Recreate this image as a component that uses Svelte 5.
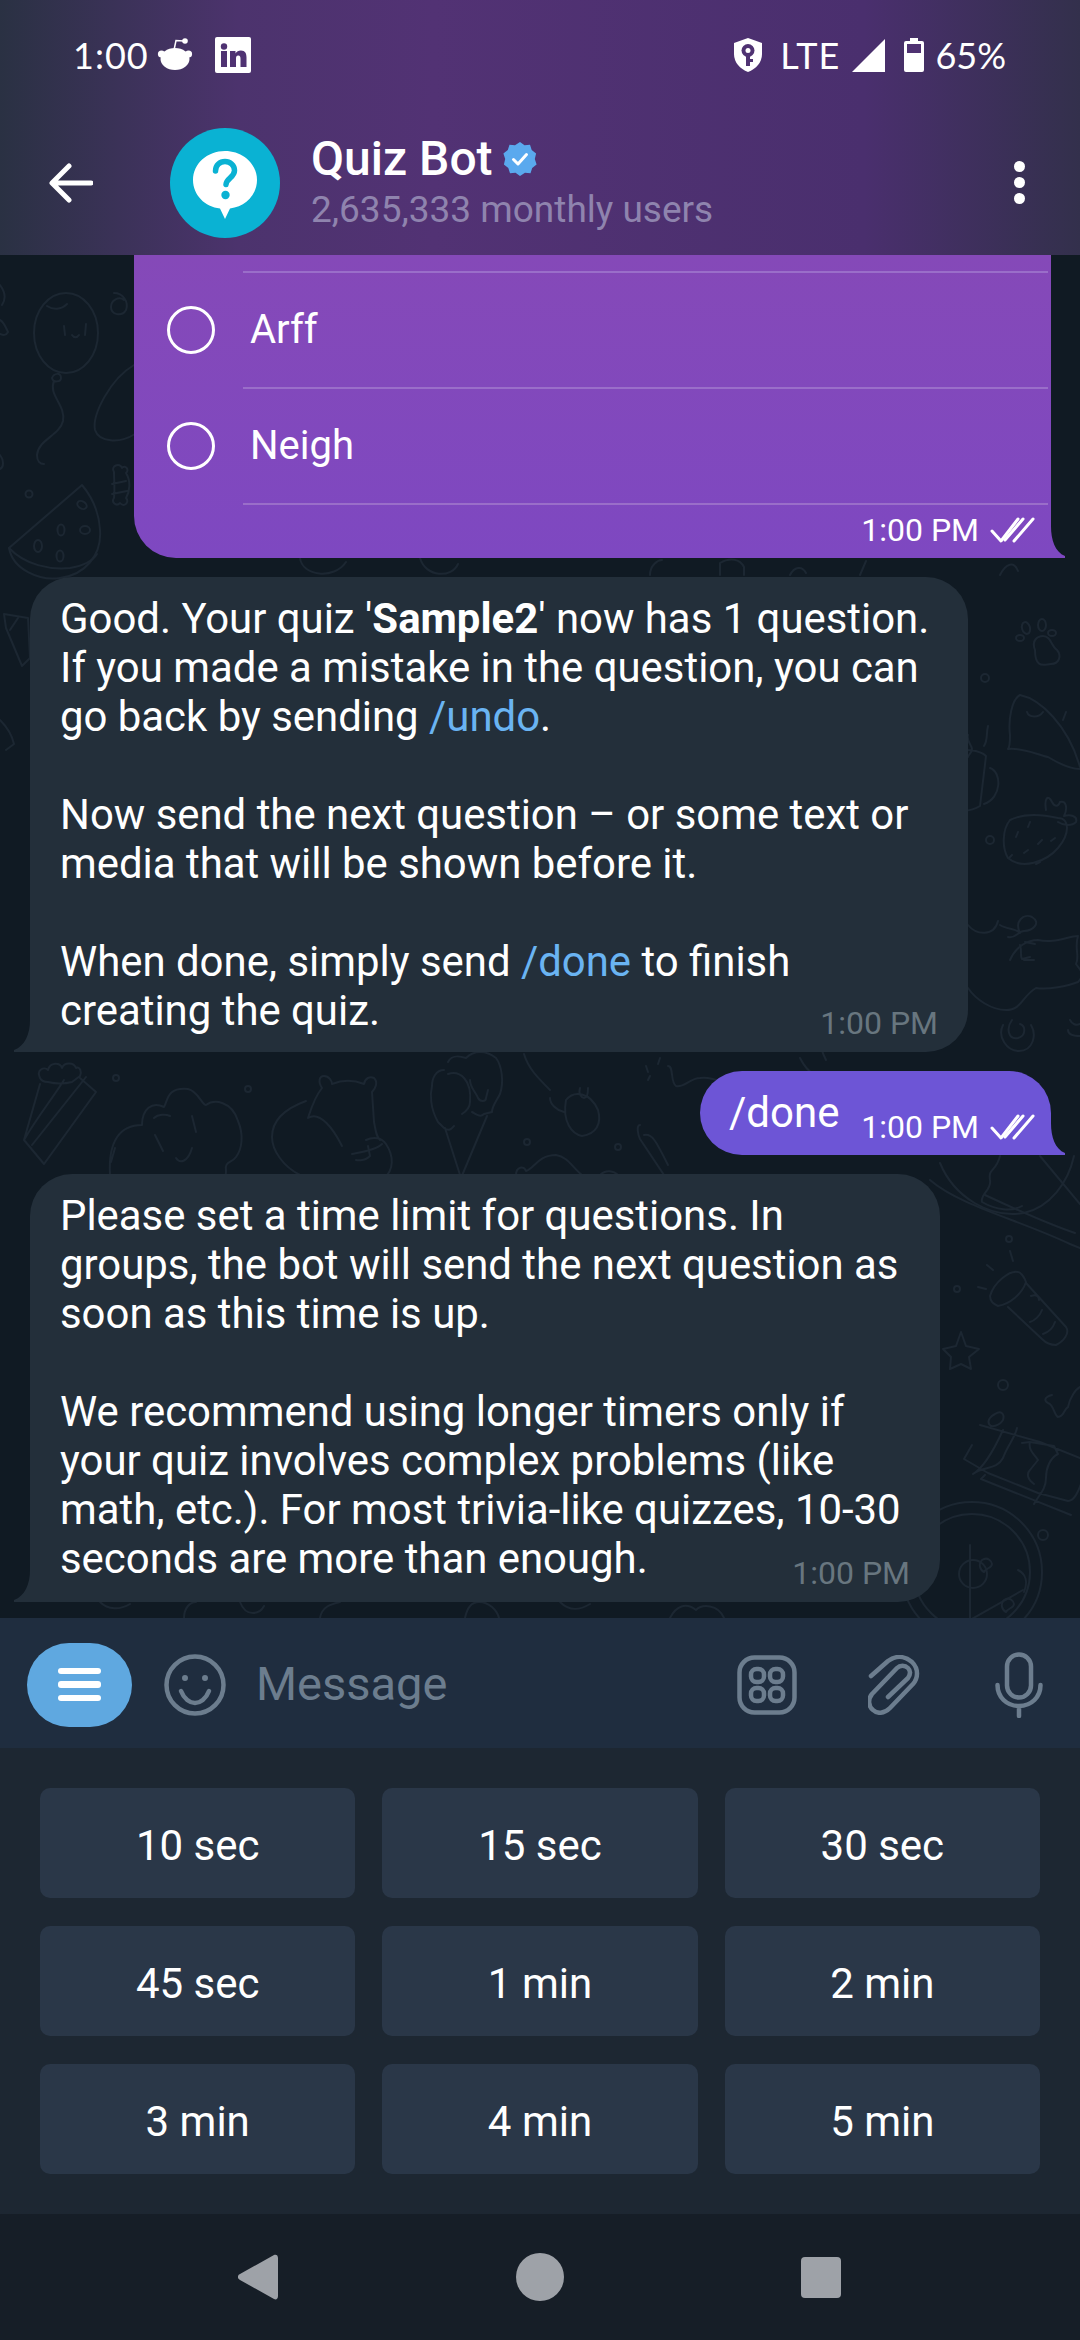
<script>
  const options = ['Arff', 'Neigh']
  const timers = ['10 sec', '15 sec', '30 sec', '45 sec', '1 min', '2 min', '3 min', '4 min', '5 min']
</script>

{#snippet ticks()}
  <svg class="ticks" width="46" height="26" viewBox="0 0 46 26" fill="none" stroke="#fff" stroke-width="3" stroke-linecap="round" stroke-linejoin="round">
    <path d="M3 14l9 10L29 2" />
    <path d="M16 23L34 2" />
    <path d="M25 24L44 2" />
  </svg>
{/snippet}

<div class="phone">
  <header class="top">
    <div class="status">
      <span class="clock">1:00</span>
      <svg class="reddit" width="36" height="34" viewBox="0 0 36 34" fill="#fff">
        <circle cx="4.5" cy="17" r="3.6" />
        <circle cx="31.5" cy="17" r="3.6" />
        <ellipse cx="18" cy="22" rx="14.5" ry="11" />
        <circle cx="28" cy="4" r="2.8" />
        <path d="M17 13l2-9.500L27 4" fill="none" stroke="#fff" stroke-width="1.500" />
      </svg>
      <svg class="linkedin" width="36" height="36" viewBox="0 0 36 36">
        <rect width="36" height="36" rx="2" fill="#fff" />
        <g fill="#4f3272">
          <circle cx="9" cy="9.500" r="3.200" />
          <rect x="6" y="14" width="6" height="16" />
          <path d="M15 14h5.500v2.500c1-1.800 3-2.900 5.400-2.900 4.400 0 5.600 2.900 5.600 7V30h-6v-8c0-2-.4-3.500-2.300-3.500S21 20 21 22v8h-6z" />
        </g>
      </svg>
      <span class="spacer"></span>
      <svg class="shield" width="28" height="34" viewBox="0 0 28 34">
        <path fill="#fff" d="M14 0l14 5v11c0 8.500-6 15-14 18C6 31 0 24.500 0 16V5z" />
        <g fill="#4f3272">
          <circle cx="14" cy="12.500" r="6.500" />
          <rect x="12" y="16" width="4" height="12" />
          <rect x="15" y="21" width="4" height="3" />
        </g>
        <circle cx="14" cy="12.500" r="2.500" fill="#fff" />
      </svg>
      <span class="lte">LTE</span>
      <svg class="signal" width="33" height="33" viewBox="0 0 33 33"><path fill="#fff" d="M33 0v33H0z" /></svg>
      <svg class="battery" width="20" height="34" viewBox="0 0 20 34">
        <path fill="#fff" d="M6 0h8v3h4a2 2 0 0 1 2 2v27a2 2 0 0 1-2 2H2a2 2 0 0 1-2-2V5a2 2 0 0 1 2-2h4z" />
        <rect x="3" y="6" width="14" height="9" fill="#4f3272" />
      </svg>
      <span class="pct">65%</span>
    </div>
    <div class="titlebar">
      <svg class="back" width="44" height="40" viewBox="0 0 44 40" fill="none" stroke="#fff" stroke-width="5" stroke-linecap="round" stroke-linejoin="round">
        <path d="M42 20H4M20 3L3 20l17 17" />
      </svg>
      <svg class="avatar" width="110" height="110" viewBox="0 0 110 110">
        <circle cx="55" cy="55" r="55" fill="#0ab2d3" />
        <path fill="#fff" d="M55 23c17.500 0 32 12.500 32 29 0 15-12 27-27 28.500L55 91l-5-10.500C35 79 23 67 23 52c0-16.500 14.500-29 32-29z" />
        <path d="M45.500 43c0-6 4.500-9.500 9.500-9.500s9.500 3.500 9.500 9c0 7-8 7.500-8.500 14" fill="none" stroke="#0ab2d3" stroke-width="5.500" stroke-linecap="round" />
        <circle cx="55.500" cy="67" r="4.200" fill="#0ab2d3" />
      </svg>
      <div class="who">
        <div class="name">
          Quiz Bot
          <svg width="34" height="34" viewBox="0 0 34 34">
            <path fill="#5aa9ee" d="M17 0l4.500 3.200 5.500-.4 1.700 5.300 4.400 3.300L31.800 17l1.800 5.600-4.400 3.300-1.700 5.300-5.500-.4L17 34l-4.500-3.200-5.500.4-1.700-5.300-4.400-3.300L2.200 17 .4 11.400l4.400-3.300L6.500 2.800l5.500.4z" />
            <path d="M10.500 17.500l4.500 4.500 8.500-9.500" fill="none" stroke="#fff" stroke-width="3" stroke-linecap="round" stroke-linejoin="round" />
          </svg>
        </div>
        <div class="users">2,635,333 monthly users</div>
      </div>
      <div class="dots"><i></i><i></i><i></i></div>
    </div>
  </header>

  <main class="chat">
    <svg class="doodles" width="1080" height="1363" viewBox="0 255 1080 1363" fill="none" stroke="#1c2732" stroke-width="2" stroke-linecap="round" stroke-linejoin="round">
      <!-- balloon, swirl, candy -->
      <ellipse cx="66" cy="333" rx="32" ry="40" />
      <path d="M47 306c6 4 14 4 20-2M64 326l1 9M86 324l-1 11M72 335c2 3 5 3 7 0" />
      <path d="M52 378c2-5 9-6 9 0 0 4-8 5-9 0zM54 381c-6 14 12 24 9 40-3 14-25 19-26 34 0 6 3 9 7 9" />
      <path d="M124 300c-5-4-13 0-13 7 0 8 11 10 15 3 3-8-3-17-12-17" />
      <path d="M114 472c-4-6 6-10 8-4 3-4 8 2 4 5 5 8 4 18 0 25 4 4-2 10-6 5-4 4-9-1-6-5 1-9 0-18 0-26zM112 484l14-3M112 494l15-3" />
      <path d="M134 365c-24 14-42 50-39 65 4 12 24 14 40 4" />
      <circle cx="29" cy="494" r="3.500" />
      <!-- watermelon -->
      <path d="M82 485L9 548c4 22 31 33 51 30 25-3 42-23 40-48-1-18-8-33-18-45z" />
      <path d="M9 548c16 17 41 22 61 20 12-2 22-6 27-14" />
      <ellipse cx="82" cy="505" rx="5" ry="3.500" transform="rotate(30 82 505)" />
      <ellipse cx="61" cy="530" rx="3.500" ry="5.500" />
      <ellipse cx="85" cy="530" rx="5" ry="4" />
      <ellipse cx="38" cy="546" rx="4" ry="6" />
      <ellipse cx="60" cy="556" rx="3.500" ry="5.500" />
      <path d="M0 285c6 8 6 14 2 20M0 320c4 2 6 8 8 12-2 4-5 3-8 2M0 455c4 5 4 12 0 14" />
      <path d="M4 614l24 4 2 40-8 8-16-38zM18 618l-8 12" />
      <path d="M0 720c6 6 12 15 14 24l-8 6" />
      <!-- below first bubble -->
      <path d="M300 558c2 18 34 22 46 4M420 558c6 20 32 20 38 6M650 575c0-10 8-15 12-15M720 575v-12c10-6 20-4 24 4v8M790 575c4-8 12-10 16-2M860 575l6-14M1000 575c6-12 14-14 18-4" />
      <!-- paw, fish, strawberry, cat, swirl, mug on the right -->
      <path d="M1035 650c-4-10 3-14 8-14 8 0 8 10 14 14 5 6 2 14-6 14-6 0-16 6-16-14z" />
      <ellipse cx="1026" cy="628" rx="4" ry="6" transform="rotate(-15 1026 628)" />
      <ellipse cx="1042" cy="625" rx="4" ry="6" />
      <ellipse cx="1052" cy="633" rx="4" ry="3" />
      <ellipse cx="1020" cy="638" rx="4" ry="3" />
      <path d="M1020 695c-8 4-12 24-10 40 0 6 0 12-2 14 14-2 30 6 40 8 10 6 22 12 32 12M1020 695c20 4 48 30 60 72M1027 712c2 6 12 6 16 0M1066 712l-3 8" />
      <path d="M1010 820c-8 10-8 28-2 38 14 12 38 4 50-10 12-14 12-30 0-30-18-4-36-4-48 2zM1046 810c-2-12 2-16 6-8 2 4 6 6 8 0 6-2 8 6 4 14 6-2 14 0 12 6-4 4-12 4-18 0" />
      <path d="M1030 822l-2 5M1018 832l-2 5M1042 840l-4 4M1028 850l-4 3M1055 838l-4 3M1012 855l-3 3M1040 862l-4 2" />
      <path d="M968 735c-2 6 4 10 4 14s-4 6-4 8M988 726c-2 8 0 14-4 20M950 752c14-4 30-2 36 4l-6 50c-10 6-24 6-30 4M990 768c12 4 12 30-6 36" />
      <circle cx="985" cy="678" r="4" />
      <circle cx="990" cy="840" r="4" />
      <path d="M968 925c8 10 26 12 30-4M1000 925c6 4 18 4 20 8-6-12 4-20 12-16 10 6 0 14-8 14-6 0-8 8-16 6M1010 960c6-14 18-20 28-20 16 4 30-4 40-4-4 12 2 20-2 28 4 6 10 10 2 18-10 4-30 8-42 6-14 8-14 22-30 22-14 0-30-10-38-22" />
      <path d="M1020 945c2 6 0 12 2 14l8-2M1025 942l10 2M1024 960l10 0" />
      <path d="M1012 1020c-6 8-4 20 6 18 8-2 8-12 2-14M1003 1025c-6 12 4 26 16 26 14 0 18-16 12-26" />
      <path d="M1070 1020c2 4 6 6 10 4M1068 1030c0 4 4 6 12 6" />
      <!-- top-right scoop, flashlight, star, chocolate, pizza -->
      <path d="M940 1163c14 34 50 56 84 50 26-6 44-30 50-57M1000 1156c-4 16-12 12-10 24 2 10-10 14-8 22 14 8 30 10 40 4" />
      <path d="M930 1180c30 26 90 40 140 64l10 4M985 1195c30 14 60 28 90 38M1040 1156l40 48" />
      <circle cx="1009" cy="1239" r="3" />
      <path d="M1010 1251l3 10M987 1265l6 5M978 1287l8 2" />
      <path d="M1018 1272c-8-2-24 10-28 24 0 6 4 8 8 10 12-2 24-12 28-24-2-6-6-10-8-10zM1026 1283l40 44c4 6-2 14-10 18-6 0-10-2-14-6l-34-32M1031 1296c5-2 8 0 8 4M1042 1310c-2 6-8 11-12 12M1055 1322c-2 6-6 10-12 12" />
      <circle cx="957" cy="1289" r="3" />
      <path d="M961 1332l5 14 13 3-10 8 2 12-10-5-11 5 1-12-8-8 13-3z" />
      <circle cx="1003" cy="1385" r="5" />
      <path d="M1052 1395c-8 2-8 6-4 8 6 2 6 12 10 14 6 0 6-8 10-10 2-10 8-18 12-20" />
      <path d="M980 1425l60 17 40 16M972 1445l-8 14 24 14 50 20 30 8c6 0 10-8 14-20M985 1475l-4 4 90 36M1003 1430c-10 22-20 38-30 44 10-8 24-4 30-16 4-12 12-20 14-30M1022 1443l8-1 24 4 4 8c-8 4-12 14-12 24 0 12-8 18-12 26M1030 1442c-2 8 4 12 8 18l-8 10c-4 4-2 10 4 14" />
      <path d="M995 1414c6-4 10 0 8 6-4 6-12 8-14 4-2-4 2-8 6-10z" />
      <circle cx="1043" cy="1535" r="5" />
      <circle cx="972" cy="1572" r="70" />
      <circle cx="972" cy="1572" r="58" />
      <circle cx="973" cy="1574" r="14" />
      <path d="M970 1545v75l53-30M970 1620l40 14" />
      <path d="M982 1560c6-4 10 2 10 4 0 4-6 4-8 8-4-2-6-8-2-12zM1004 1600c6-4 10 2 10 4 0 4-6 4-8 8-4-2-6-8-2-12zM1018 1570c8 4 10 12 6 22" />
      <!-- bottom row behind the second text bubble -->
      <path d="M40 1078c-4-8 4-12 8-8 2-8 12-8 14-2 2-6 12-6 14 0 4-2 6 4 4 8l-8 6c-8 2-16 2-24 0-2 0-6 0-8-4zM40 1084l-16 56 20 24 52-72-16-14M24 1140c14-24 26-38 40-60M32 1145l54-68" />
      <path d="M110 1175c-2-34 10-50 32-50 0-16 10-24 22-18 4-6 2-20 24-18 10 2 14 16 18 16 8-6 26-4 32 16 6 14 4 28-2 36-4 6-12 4-10 14 0 6-2 12-2 22M154 1118c4-4 12-4 16-2M192 1116l4 16M155 1135l8 16M176 1158c4 6 12 4 16-10M115 1148l-4 14" />
      <path d="M300 1175c-16-8-28-24-28-38 0-16 12-28 34-36M322 1088c-4-6-3-12 2-12s8 5 8 8c10-4 22-4 32 0 1-6 6-8 10-6 4 4 2 10-2 14l2 30c2 10 2 14 6 18M322 1088c-8 10-12 24-14 30 12-8 26 12 34 28M366 1140c8-4 16-2 20 4 8 12 8 26-2 34M352 1154c10-2 24-4 30-10M368 1146l2 10c-6 6-14 4-14 4" />
      <path d="M448 1062c4-8 12-6 18-4 8-8 20-8 30 0 6 8 8 24 4 36-4 8-8 12-8 18l-8 2c-4 4-8 0-12-2M432 1086c0-8 4-16 12-16M432 1086c-2 8-2 22 6 36l6 6c6 4 8 0 10-2M448 1074c12-4 24 6 22 28 0 4-2 8-8 12M445 1128l16 50 26-62M470 1080c0 8 6 12 8 18 2 4 8 4 8 0l2-8" />
      <path d="M524 1054c4 14 14 24 26 36M566 1100c8-10 24-8 32 10 4 14-2 24-16 26-10-2-20-14-16-36zM580 1088c-2 6 2 10 4 10 4 0 4-6 4-10M550 1098c0 6 6 12 14 14" />
      <path d="M646 1066l2 6 M660 1058l-2 6M650 1076l-2 4M668 1066c6 0 2 16 8 20 8 2 14-8 24-8 12-2 20 4 28 6" />
      <circle cx="116" cy="1078" r="3" />
      <circle cx="248" cy="1089" r="3" />
      <circle cx="527" cy="1142" r="3" />
      <circle cx="618" cy="1147" r="3" />
      <path d="M640 1125c-4 0-2 10 0 14l24 36M644 1135c8-2 12 6 24 30" />
      <path d="M516 1175c0-8 8-10 10-4 8-2 12-16 30-16 12 2 16 12 26 20M600 1175c6-6 14-4 18 0" />
      <path d="M800 1058c8 16 20 22 28 18M820 1040c0 6 2 12 6 20" />
      <!-- strip above the input bar -->
      <path d="M100 1602c8 8 20 8 30 2M184 1618c0-10 6-16 12-16M240 1602c6 16 20 12 24 4M320 1618c2-12 12-14 20-16M465 1618c2-10 6-16 14-16 10 0 18 8 20 16M560 1602c10 10 20 8 30 2M670 1618c6-12 16-16 26-8 6-6 22-6 28 8" />
    </svg>

    <div class="row out">
      <div class="bubble poll">
        <div class="edge"></div>
        {#each options as opt}
          <div class="option">
            <span class="radio"></span>
            <span class="label">{opt}</span>
          </div>
        {/each}
        <div class="meta">1:00 PM {@render ticks()}</div>
      </div>
    </div>

    <div class="row in">
      <div class="bubble grey wide">
        <p>Good. Your quiz '<b>Sample2</b>' now has 1 question.<br />If you made a mistake in the question, you can<br />go back by sending <span class="cmd">/undo</span>.</p>
        <p>Now send the next question – or some text or<br />media that will be shown before it.</p>
        <p>When done, simply send <span class="cmd">/done</span> to finish<br />creating the quiz.</p>
        <span class="stamp">1:00 PM</span>
      </div>
    </div>

    <div class="row out">
      <div class="bubble sent">
        <span class="msg">/done</span>
        <div class="meta">1:00 PM {@render ticks()}</div>
      </div>
    </div>

    <div class="row in">
      <div class="bubble grey narrow">
        <p>Please set a time limit for questions. In<br />groups, the bot will send the next question as<br />soon as this time is up.</p>
        <p>We recommend using longer timers only if<br />your quiz involves complex problems (like<br />math, etc.). For most trivia-like quizzes, 10-30<br />seconds are more than enough.</p>
        <span class="stamp">1:00 PM</span>
      </div>
    </div>
  </main>

  <div class="composer">
    <div class="menu-btn"><i></i><i></i><i></i></div>
    <svg class="smile" width="62" height="62" viewBox="0 0 62 62" fill="none" stroke="#6c7d8e" stroke-width="4.500" stroke-linecap="round">
      <circle cx="31" cy="31" r="28.500" />
      <path d="M17 37c3 8 9 12 14 12s11-4 14-12" />
      <circle cx="21" cy="24" r="2" fill="#6c7d8e" stroke-width="2" />
      <circle cx="41" cy="24" r="2" fill="#6c7d8e" stroke-width="2" />
    </svg>
    <span class="placeholder">Message</span>
    <svg class="grid-icon" width="60" height="60" viewBox="0 0 60 60" fill="none" stroke="#6c7d8e" stroke-width="4.500">
      <rect x="2.500" y="2.500" width="55" height="55" rx="15" />
      <rect x="14" y="14" width="13" height="13" rx="5.500" />
      <rect x="33" y="14" width="13" height="13" rx="5.500" />
      <rect x="14" y="33" width="13" height="13" rx="5.500" />
      <rect x="33" y="33" width="13" height="13" rx="5.500" />
    </svg>
    <svg class="clip" width="52" height="60" viewBox="0 0 52 60" fill="none" stroke="#6c7d8e" stroke-width="4.500" stroke-linecap="round" stroke-linejoin="round">
      <path d="M3 21L20 6c8-6 17-5 24 1 7 7 6 16 1 22L22 53c-6 6-13 6-17 2-5-4-5-11-1-16l25-26c3-3 8-3 11 0 3 3 2 7 0 10L20 42" />
    </svg>
    <svg class="mic" width="48" height="66" viewBox="0 0 48 66" fill="none" stroke="#6c7d8e" stroke-width="4.500" stroke-linecap="round">
      <rect x="12" y="2.500" width="24" height="43" rx="12" />
      <path d="M2.500 33c0 12 9 21 21.500 21s21.500-9 21.500-21M24 54v10" />
    </svg>
  </div>

  <div class="keys">
    {#each timers as t}
      <button class="key">{t}</button>
    {/each}
  </div>

  <nav class="nav">
    <svg width="40" height="46" viewBox="0 0 40 46"><path fill="#9ea2a8" d="M36 1c2-1 4 0 4 3v38c0 3-2 4-4 3L2 26c-3-1.500-3-4.500 0-6z" /></svg>
    <span class="home"></span>
    <span class="recents"></span>
  </nav>
</div>

<style>
  :global(body) { margin: 0; background: #101a23; }
  .phone { width: 1080px; height: 2340px; display: flex; flex-direction: column; overflow: hidden; font-family: Roboto, sans-serif; color: #fff; }

  .top { height: 255px; flex: none; background: linear-gradient(90deg, #2a3143 0%, #4c336d 22%, #523274 40%, #4a2f6e 80%, #33304c 100%); }
  .status { height: 110px; box-sizing: border-box; padding: 0 74px 0 73px; display: flex; align-items: center; font-family: Lato, sans-serif; font-size: 36px; }
  .clock { letter-spacing: 1px; width: 84px; }
  .reddit { margin-right: 22px; margin-top: -3px; }
  .spacer { flex: 1; }
  .lte { margin: 0 12px 0 18px; letter-spacing: 1px; }
  .signal { margin-right: 19px; }
  .battery { margin-right: 11px; }

  .titlebar { height: 145px; display: flex; align-items: center; }
  .back { margin-left: 49px; }
  .avatar { margin-left: 77px; flex: none; }
  .who { margin-left: 31px; flex: 1; margin-top: -2px; }
  .name { font-size: 48px; font-weight: 500; line-height: 56px; display: flex; align-items: center; gap: 10px; }
  .users { font-size: 37px; line-height: 46px; color: #8f84ae; }
  .dots { margin-right: 55px; display: flex; flex-direction: column; gap: 5px; }
  .dots i { width: 11px; height: 11px; border-radius: 50%; background: #fff; }

  .chat { position: relative; flex: 1; min-height: 0; display: flex; flex-direction: column; justify-content: flex-end; gap: 19px; padding-bottom: 16px; background: #101a23; overflow: hidden; }
  .doodles { position: absolute; left: 0; top: 0; }
  .row { position: relative; display: flex; }
  .row.out { justify-content: flex-end; padding-right: 29px; }
  .row.in { padding-left: 30px; }

  .bubble { position: relative; box-sizing: border-box; font-size: 41.9px; line-height: 49px; }
  .bubble p { margin: 0 0 49px; white-space: nowrap; }
  .bubble p:last-of-type { margin-bottom: 0; }
  .bubble b { font-weight: 700; }
  .cmd { color: #6ab4f2; }

  .grey { background: #232f3a; border-radius: 42px 42px 42px 0; padding: 17px 30px 17px; }
  .grey.wide { width: 938px; }
  .grey.narrow { width: 910px; padding-bottom: 19px; }
  .grey::after { content: ''; position: absolute; left: -16px; bottom: 0; width: 16px; height: 32px; background: #232f3a; clip-path: path('M16 0C16 14 11 26 0 30L0 32L16 32Z'); }
  .stamp { position: absolute; right: 30px; bottom: 11px; font-size: 32px; line-height: 36px; color: #68767f; }

  .poll { width: 917px; height: 303px; padding-left: 109px; border-radius: 0 0 0 42px; background: linear-gradient(180deg, #8549b8, #7e48c1); }
  .poll::after, .sent::after { content: ''; position: absolute; right: -14px; bottom: 0; width: 14px; height: 32px; clip-path: path('M0 0C0 14 4 26 14 30L14 32L0 32Z'); }
  .poll::after { background: #7e48c1; }
  .edge { height: 18px; border-bottom: 2px solid #9a6ec9; box-sizing: border-box; margin-right: 3px; }
  .option { position: relative; height: 116px; box-sizing: border-box; margin-right: 3px; border-bottom: 2px solid #9a6ec9; display: flex; align-items: center; }
  .radio { position: absolute; left: -76px; top: 33px; width: 48px; height: 48px; box-sizing: border-box; border: 3px solid #fff; border-radius: 50%; }
  .label { margin-left: 7px; font-size: 40px; margin-top: -2px; }

  .meta { position: absolute; right: 16px; bottom: 10px; display: flex; align-items: center; gap: 10px; font-size: 32px; line-height: 36px; white-space: nowrap; }
  .ticks { flex: none; }

  .sent { width: 351px; height: 84px; background: #6d55d6; border-radius: 42px 42px 0 42px; padding: 17px 0 0 29px; }
  .sent::after { background: #6d55d6; }
  .msg { font-size: 42px; }

  .composer { height: 130px; flex: none; background: #1f2d3f; display: flex; align-items: center; padding: 3px 0 0 27px; box-sizing: border-box; }
  .menu-btn { width: 105px; height: 84px; border-radius: 42px; background: #5fa8e0; display: flex; flex-direction: column; align-items: center; justify-content: center; gap: 7px; }
  .menu-btn i { width: 43px; height: 6.500px; border-radius: 3px; background: #fff; }
  .smile { margin-left: 32px; }
  .placeholder { margin-left: 30px; flex: 1; font-size: 47px; color: #6c7d8e; margin-top: -3px; }
  .grid-icon { margin-right: 71px; }
  .clip { margin-right: 75px; }
  .mic { margin-right: 37px; }

  .keys { flex: none; height: 466px; box-sizing: border-box; background: #1d2732; padding: 40px; display: grid; grid-template-columns: repeat(3, 1fr); column-gap: 27px; row-gap: 28px; }
  .key { background: #2a3748; border: none; border-radius: 10px; color: #fff; font-family: inherit; font-size: 42px; padding: 4px 0 0; height: 110px; }

  .nav { flex: none; height: 126px; background: #161e27; display: flex; align-items: center; position: relative; padding-left: 238px; box-sizing: border-box; }
  .home { margin-left: 238px; width: 48px; height: 48px; border-radius: 50%; background: #9ea2a8; }
  .recents { margin-left: 237px; width: 40px; height: 41px; border-radius: 4px; background: #9ea2a8; }
</style>
